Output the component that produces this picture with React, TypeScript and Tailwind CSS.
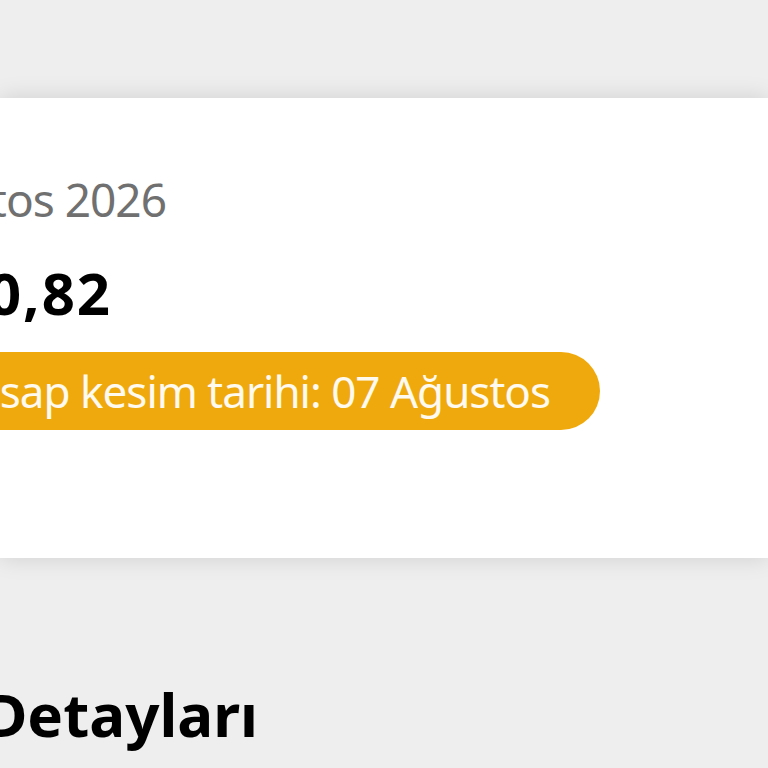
export default function App() {
  return (
    <div className="h-[768px] w-[768px] overflow-hidden bg-[#eeeeee] font-['Noto_Sans',sans-serif]">
      <div className="h-[98px]" />
      <div className="flex h-[460px] flex-col bg-white shadow-[0_0_22px_rgba(0,0,0,0.13)]">
        <div className="mt-[78px] flex w-[166px] justify-end">
          <span className="whitespace-nowrap text-[46px] leading-none tracking-[-1px] text-[#707070]">
            Ağustos 2026
          </span>
        </div>
        <div className="mt-[42px] flex w-[112px] justify-end">
          <span className="whitespace-nowrap text-[58px] font-bold leading-none tracking-[2px] text-black">
            ₺ 120,82
          </span>
        </div>
        <div className="mt-[30px] flex w-[600px] justify-end">
          <div className="flex h-[78px] items-center whitespace-nowrap rounded-full bg-[#f0a90c] pr-[50px] pl-[40px] text-[44px] tracking-[-1px] text-[#fffaf0]">
            Hesap kesim tarihi: 07 Ağustos
          </div>
        </div>
      </div>
      <div className="mt-[126px] flex w-[258px] justify-end">
        <h2 className="whitespace-nowrap text-[60px] font-bold leading-none tracking-[0px] text-black">
          Fatura Detayları
        </h2>
      </div>
    </div>
  );
}
